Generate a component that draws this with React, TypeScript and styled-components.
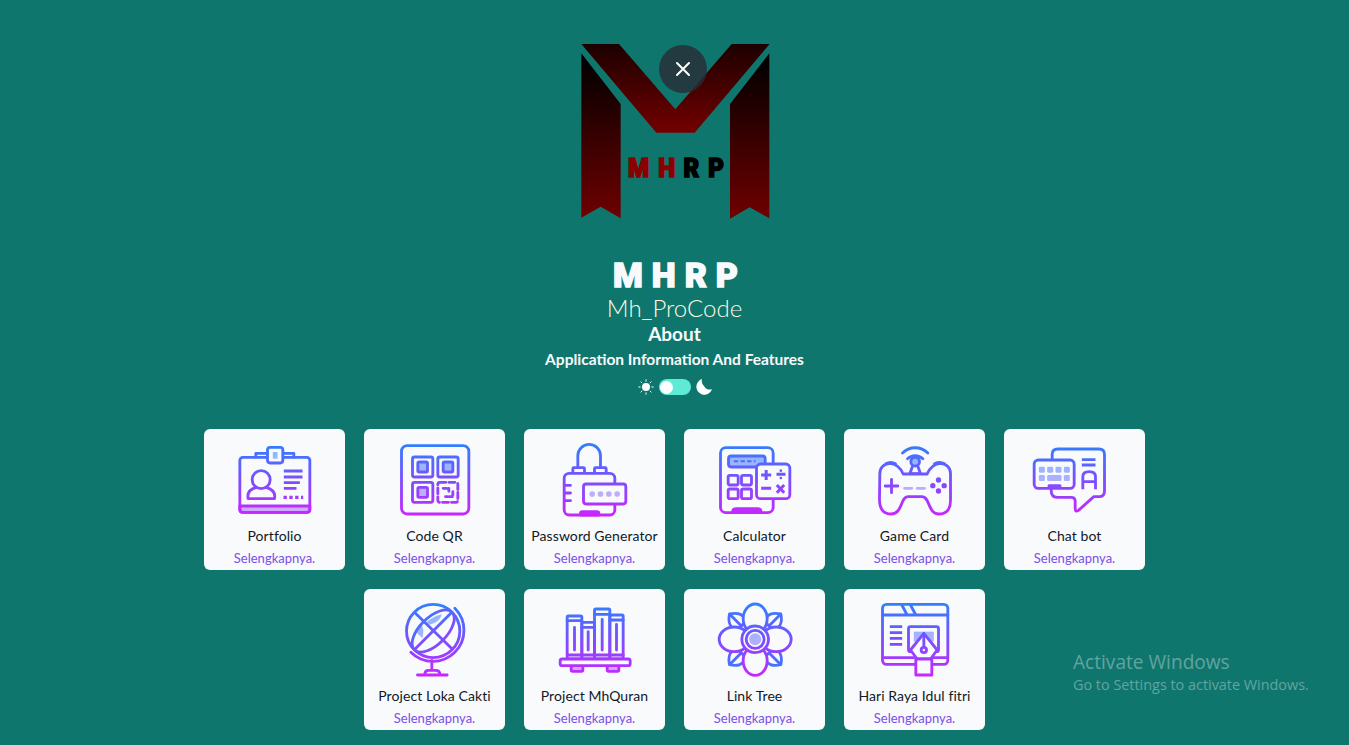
import React from "react";
import styled, { createGlobalStyle } from "styled-components";

const Global = createGlobalStyle`
  html, body { margin: 0; padding: 0; background: #0f766e; }
  body { font-family: "Lato", "Noto Sans", sans-serif; }
`;

const Page = styled.div`
  position: relative;
  width: 1349px;
  height: 745px;
  overflow: hidden;
  background: #0f766e;
  display: flex;
  flex-direction: column;
  align-items: center;
  padding-top: 30px;
  box-sizing: border-box;
`;

const Hero = styled.header`
  position: relative;
  display: flex;
  flex-direction: column;
  align-items: center;
  width: 300px;
`;

const LogoArt = styled.svg`
  display: block;
  width: 240px;
  height: 200px;
`;

const CloseButton = styled.button`
  position: absolute;
  left: 134px;
  top: 15px;
  width: 48px;
  height: 48px;
  border: 0;
  padding: 0;
  border-radius: 50%;
  background: rgba(40, 45, 52, 0.8);
  display: flex;
  align-items: center;
  justify-content: center;
`;

const Title = styled.h1`
  margin: 29px 0 0;
  padding-left: 11px;
  font-family: "Roboto", sans-serif;
  font-weight: 900;
  font-size: 34px;
  line-height: 33px;
  letter-spacing: 9px;
  color: #f8fafc;
  -webkit-text-stroke: 1.4px #f8fafc;
`;

const Handle = styled.p`
  margin: 2px 0 0;
  font-weight: 300;
  font-size: 24px;
  line-height: 27px;
  color: #fef9e0;
`;

const About = styled.h2`
  margin: 0;
  font-weight: 700;
  font-size: 19px;
  line-height: 26px;
  color: #f8fafc;
`;

const Subtitle = styled.h3`
  margin: 0;
  font-weight: 700;
  font-size: 15.5px;
  line-height: 24px;
  color: #f8fafc;
  white-space: nowrap;
`;

const ThemeRow = styled.div`
  display: flex;
  align-items: center;
  gap: 5px;
  margin-top: 7px;
  height: 18px;
`;

const Toggle = styled.span`
  display: flex;
  align-items: center;
  box-sizing: border-box;
  width: 32px;
  height: 16px;
  padding-left: 1.5px;
  border-radius: 8px;
  background: #5eead4;
`;

const Knob = styled.span`
  width: 13px;
  height: 13px;
  border-radius: 50%;
  background: #fff;
`;

const Grid = styled.main`
  display: flex;
  flex-wrap: wrap;
  justify-content: center;
  gap: 19px;
  width: 941px;
  margin-top: 33px;
`;

const Card = styled.a`
  width: 141px;
  height: 141px;
  box-sizing: border-box;
  padding-top: 13px;
  border-radius: 6px;
  background: #f8fafc;
  display: flex;
  flex-direction: column;
  align-items: center;
`;

const IconBox = styled.svg`
  display: block;
  width: 76px;
  height: 76px;
  flex: none;
  overflow: visible;
`;

const Label = styled.span`
  margin-top: 8px;
  font-size: 14px;
  line-height: 20px;
  letter-spacing: 0.08px;
  color: #111827;
  white-space: nowrap;
`;

const More = styled.span`
  margin-top: 4px;
  font-size: 13px;
  line-height: 16px;
  color: #7c4dea;
  white-space: nowrap;
`;

const Watermark = styled.aside`
  position: absolute;
  left: 1073px;
  top: 650px;
  font-family: "Open Sans", sans-serif;
  color: rgba(255, 255, 255, 0.35);
`;

const WatermarkTitle = styled.div`
  font-size: 19.1px;
  line-height: 24px;
`;

const WatermarkText = styled.div`
  font-size: 14.4px;
  line-height: 22px;
`;

const BG = "#f8fafc";

type IconProps = { id: string; col?: 0 | 1; children: (s: string, l: string) => React.ReactNode };

function Icon({ id, col = 0, children }: IconProps) {
  const s = `url(#${id}s)`;
  const l = `url(#${id}l)`;
  return (
    <IconBox viewBox={`${col ? 589.5 : 109.5} 51 228 228`} fill="none" strokeWidth={8.5} strokeLinecap="round" strokeLinejoin="round">
      <defs>
        <linearGradient id={`${id}s`} gradientUnits="userSpaceOnUse" x1="0" y1="55" x2="0" y2="272">
          <stop offset="0" stopColor="#2f80ff" />
          <stop offset="0.5" stopColor="#7a4fff" />
          <stop offset="1" stopColor="#c926ff" />
        </linearGradient>
        <linearGradient id={`${id}l`} gradientUnits="userSpaceOnUse" x1="0" y1="55" x2="0" y2="272">
          <stop offset="0" stopColor="#7fbcff" />
          <stop offset="1" stopColor="#d9a6ff" />
        </linearGradient>
      </defs>
      {children(s, l)}
    </IconBox>
  );
}

const PortfolioIcon = () => (
  <Icon id="pf">
    {(s, l) => (
      <g stroke={s}>
        <path d="M118 243H328V254a8 8 0 0 1-8 8H126a8 8 0 0 1-8-8Z" fill={l} />
        <rect x="118" y="97" width="210" height="165" rx="9" />
        <path d="M166 97V85H200M248 85H280V97" />
        <rect x="201" y="67" width="46" height="47" rx="8" fill={BG} />
        <rect x="217" y="81" width="14" height="20" fill={l} stroke="none" />
        <circle cx="182" cy="164" r="27" />
        <path d="M168 187C152 191 139 201 143 221H222C226 201 212 191 196 187" />
        <path d="M250 138H306M250 156H306M250 173H298M250 190H288" strokeLinecap="butt" />
        <path d="M249 217H308" strokeDasharray="10 7.5" strokeWidth="10" strokeLinecap="butt" />
      </g>
    )}
  </Icon>
);

const QrIcon = () => (
  <Icon id="qr" col={1}>
    {(s, l) => (
      <g stroke={s}>
        <rect x="603" y="62" width="202" height="205" rx="17" />
        {[[636, 96], [712, 96], [636, 172]].map(([x, y]) => (
          <g key={x * y}>
            <rect x={x} y={y} width="61" height="60" rx="6" />
            <rect x={x + 16} y={y + 15} width="29" height="30" rx="4" fill={l} />
          </g>
        ))}
        <rect x="712" y="172" width="60" height="60" rx="6" strokeDasharray="18 9" />
        <path d="M728 190H745V205M757 200V215H735" strokeDasharray="10 6" />
      </g>
    )}
  </Icon>
);

const PasswordIcon = () => (
  <Icon id="pw">
    {(s, l) => (
      <g stroke={s}>
        <path d="M172 128V92A34 34 0 0 1 240 92V128" />
        <rect x="157" y="128" width="35" height="17" rx="3" />
        <rect x="222" y="128" width="35" height="17" rx="3" />
        <rect x="131" y="145" width="152" height="125" rx="15" fill={BG} />
        <path d="M133 181H150M133 204H150M133 227H150" />
        <path d="M180 270V265Q180 260 186 260H229Q235 260 235 265V270Z" fill={s} />
        <rect x="189" y="177" width="127" height="60" rx="8" fill={BG} />
        {[215, 240, 265, 290].map((x) => (
          <circle key={x} cx={x} cy="207" r="8.5" fill={l} stroke="none" />
        ))}
      </g>
    )}
  </Icon>
);

const CalculatorIcon = () => (
  <Icon id="ca" col={1}>
    {(s, l) => (
      <g stroke={s}>
        <rect x="600" y="68" width="158" height="195" rx="16" />
        <rect x="624" y="93" width="110" height="33" rx="8" fill={l} />
        <path d="M640 109H705" strokeDasharray="13 7" strokeLinecap="butt" strokeWidth="6" />
        <rect x="623" y="151" width="30" height="29" rx="5" />
        <rect x="663" y="151" width="30" height="29" rx="5" />
        <rect x="623" y="192" width="30" height="29" rx="5" />
        <rect x="663" y="192" width="30" height="29" rx="5" />
        <path d="M636 263Q636 251 646 251H712Q722 251 722 263Z" fill={s} />
        <rect x="708" y="117" width="100" height="104" rx="12" fill={BG} />
        <path d="M722 150H752M737 135V165M722 190H752M768 148H795M769 180L791 203M791 180L769 203" strokeWidth="9" strokeLinecap="butt" />
        <circle cx="781" cy="137" r="4" fill={s} stroke="none" />
        <circle cx="781" cy="159" r="4" fill={s} stroke="none" />
      </g>
    )}
  </Icon>
);

const GameIcon = () => (
  <Icon id="gm">
    {(s, l) => (
      <g stroke={s}>
        <path d="M186 84A54 54 0 0 1 262 84M201 101A33 33 0 0 1 247 101" />
        <circle cx="224" cy="110" r="13" fill={l} />
        <path d="M216 124L208 146H240L232 124" />
        <path d="M118 145Q119 118 150 115Q176 118 188 147H260Q272 118 298 115Q329 118 330 145V220Q332 267 295 267C262 267 268 215 245 215H202C180 215 186 267 152 267Q116 267 117 220Z" />
        <path d="M134 183H172M153 163V203" />
        <path d="M192 190H214M230 190H252" stroke={l} />
        <path d="M136 116Q150 108 165 116M282 116Q298 108 312 116" />
        {[[294, 165], [277, 182], [311, 182], [294, 198]].map(([x, y]) => (
          <circle key={x + y} cx={x} cy={y} r="8" fill={s} stroke="none" />
        ))}
      </g>
    )}
  </Icon>
);

const ChatIcon = () => (
  <Icon id="ch" col={1}>
    {(s, l) => (
      <g stroke={s}>
        <path d="M635 104V88Q635 72 652 72H775Q792 72 792 88V198Q792 215 776 215H760L714 256Q704 263 704 250V229Q704 217 692 217H650Q632 217 632 195" />
        <rect x="581" y="105" width="120" height="85" rx="12" fill={BG} />
        {[595, 620, 645, 670].map((x) => (
          <rect key={x} x={x} y="125" width="18" height="18" rx="4" fill={l} stroke="none" />
        ))}
        <rect x="595" y="150" width="18" height="18" rx="4" fill={l} stroke="none" />
        <rect x="620" y="150" width="43" height="18" rx="4" fill={l} stroke="none" />
        <rect x="670" y="150" width="18" height="18" rx="4" fill={l} stroke="none" />
        <path d="M626 183H658" strokeWidth="10" />
        <path d="M724 104H765M724 120H765M727 193V155Q727 140 746 140Q765 140 765 155V193M727 170H765" strokeLinecap="butt" />
      </g>
    )}
  </Icon>
);

const GlobeIcon = () => (
  <Icon id="gl">
    {(s, l) => (
      <g stroke={s}>
        <path d="M198 112Q218 94 244 88Q238 112 207 119Z" fill={l} stroke="none" />
        <path d="M170 145Q172 125 181 115Q193 132 186 160Z" fill={l} stroke="none" />
        <circle cx="218" cy="138" r="80" />
        <ellipse cx="218" cy="138" rx="80" ry="40" transform="rotate(-45 218 138)" />
        <path d="M164 84L273 190M163 193L274 82" />
        <path d="M283 70A92 92 0 0 1 151 202" />
        <path d="M214 226V255M171 270H260" />
        <path d="M193 268Q193 256 205 256H225Q238 256 238 268" />
      </g>
    )}
  </Icon>
);

const BooksIcon = () => (
  <Icon id="bk" col={1}>
    {(s, l) => (
      <g stroke={s}>
        <rect x="620" y="93" width="44" height="129" rx="4" />
        <rect x="664" y="112" width="38" height="110" />
        <rect x="702" y="72" width="46" height="150" rx="4" />
        <rect x="748" y="90" width="40" height="132" rx="4" />
        <path d="M620 107H664M664 127H702M702 88H748M748 105H788M620 210H788" />
        <path d="M642 127V195M683 140V195M725 103V195M768 118V195" />
        <rect x="632" y="242" width="35" height="17" rx="4" fill={l} />
        <rect x="740" y="242" width="35" height="17" rx="4" fill={l} />
        <rect x="599" y="222" width="210" height="20" rx="6" fill={BG} />
      </g>
    )}
  </Icon>
);

const FlowerIcon = () => (
  <Icon id="fl">
    {(s, l) => (
      <g stroke={s}>
        {[
          [1, 1],
          [-1, 1],
          [1, -1],
          [-1, -1],
        ].map(([a, b]) => (
          <g key={`${a}${b}`} transform={`translate(224 163) scale(${a} ${b}) translate(-224 -163)`}>
            <path d="M195 110C190 85 170 82 147 87C142 110 148 130 170 135Z" fill={BG} />
            <path d="M150 90L182 122" />
          </g>
        ))}
        <ellipse cx="224" cy="101" rx="36" ry="44" fill={BG} />
        <ellipse cx="224" cy="227" rx="36" ry="44" fill={BG} />
        <ellipse cx="161" cy="163" rx="45" ry="37" fill={BG} />
        <ellipse cx="287" cy="163" rx="45" ry="37" fill={BG} />
        <circle cx="224" cy="163" r="40" fill={BG} />
        <circle cx="224" cy="163" r="27" />
        <circle cx="224" cy="163" r="18" fill={l} stroke="none" />
      </g>
    )}
  </Icon>
);

const RayaIcon = () => (
  <Icon id="ry" col={1}>
    {(s, l) => (
      <g stroke={s}>
        <rect x="606" y="58" width="196" height="180" rx="12" />
        <path d="M606 90H802M664 60L680 90M690 60L706 90M606 218H700M752 218H802" />
        <path d="M628 125H665M628 143H665M628 160H665M628 178H665" strokeLinecap="butt" />
        <path d="M700 200H690Q684 200 684 194V131Q684 125 690 125H768Q774 125 774 131V194Q774 200 768 200H760" />
        <rect x="700" y="140" width="60" height="30" fill={l} stroke="none" />
        <path d="M730 145L770 195L750 222H710L690 195Z" fill={BG} />
        <path d="M730 147V184" />
        <circle cx="730" cy="195" r="8" />
        <path d="M706 222H754V270H706Z" fill={BG} />
      </g>
    )}
  </Icon>
);

const apps: [string, React.FC][] = [
  ["Portfolio", PortfolioIcon],
  ["Code QR", QrIcon],
  ["Password Generator", PasswordIcon],
  ["Calculator", CalculatorIcon],
  ["Game Card", GameIcon],
  ["Chat bot", ChatIcon],
  ["Project Loka Cakti", GlobeIcon],
  ["Project MhQuran", BooksIcon],
  ["Link Tree", FlowerIcon],
  ["Hari Raya Idul fitri", RayaIcon],
];

const Logo = () => (
  <LogoArt viewBox="-14 0 720 600">
    <defs>
      <linearGradient id="logoSide" x1="0" y1="0" x2="0" y2="1">
        <stop offset="0.02" stopColor="#000" />
        <stop offset="1" stopColor="#6f0000" />
      </linearGradient>
      <linearGradient id="logoV" x1="0" y1="0" x2="0" y2="1">
        <stop offset="0" stopColor="#1c0000" />
        <stop offset="1" stopColor="#720000" />
      </linearGradient>
    </defs>
    <path d="M65 70L183 222V565L123 530L65 563Z" fill="url(#logoSide)" />
    <path d="M629 70L511 222V566L570 532L629 565Z" fill="url(#logoSide)" />
    <path d="M65 42H178L347 238L516 42H630L405 308H290Z" fill="url(#logoV)" />
    <g transform="scale(.9 1)">
      <text y="442" fontFamily="Roboto, sans-serif" fontWeight="900" fontSize="80" strokeWidth="5" fill="#000" stroke="#000">
        <tspan x="228" fill="#8a0000" stroke="#8a0000">M</tspan>
        <tspan x="329" fill="#8a0000" stroke="#8a0000">H</tspan>
        <tspan x="413">R</tspan>
        <tspan x="495">P</tspan>
      </text>
    </g>
  </LogoArt>
);

const CloseIcon = () => (
  <svg width="16" height="16" viewBox="0 0 16 16" fill="none" stroke="#fff" strokeWidth="2" strokeLinecap="round">
    <path d="M2 2L14 14M14 2L2 14" />
  </svg>
);

const SunIcon = () => (
  <svg width="16" height="16" viewBox="0 0 16 16" fill="#fff" stroke="#fff" strokeWidth="1" strokeLinecap="round">
    <circle cx="8" cy="8" r="4" stroke="none" />
    <path d="M8 .8V2.2M8 13.8V15.2M.8 8H2.2M13.8 8H15.2M2.9 2.9L3.9 3.9M12.1 12.1L13.1 13.1M13.1 2.9L12.1 3.9M3.9 12.1L2.9 13.1" />
  </svg>
);

const MoonIcon = () => (
  <svg width="16" height="16" viewBox="0 0 16 16" fill="#fff">
    <path d="M6 0.1A8 8 0 1 0 16 10.2A6.4 6.4 0 0 1 8 7A7 7 0 0 1 6 0.1Z" />
  </svg>
);

export default function App() {
  return (
    <Page>
      <Global />
      <Hero>
        <Logo />
        <CloseButton aria-label="Close">
          <CloseIcon />
        </CloseButton>
        <Title>MHRP</Title>
        <Handle>Mh_ProCode</Handle>
        <About>About</About>
        <Subtitle>Application Information And Features</Subtitle>
        <ThemeRow>
          <SunIcon />
          <Toggle>
            <Knob />
          </Toggle>
          <MoonIcon />
        </ThemeRow>
      </Hero>
      <Grid>
        {apps.map(([name, Glyph]) => (
          <Card key={name}>
            <Glyph />
            <Label>{name}</Label>
            <More>Selengkapnya.</More>
          </Card>
        ))}
      </Grid>
      <Watermark>
        <WatermarkTitle>Activate Windows</WatermarkTitle>
        <WatermarkText>Go to Settings to activate Windows.</WatermarkText>
      </Watermark>
    </Page>
  );
}
